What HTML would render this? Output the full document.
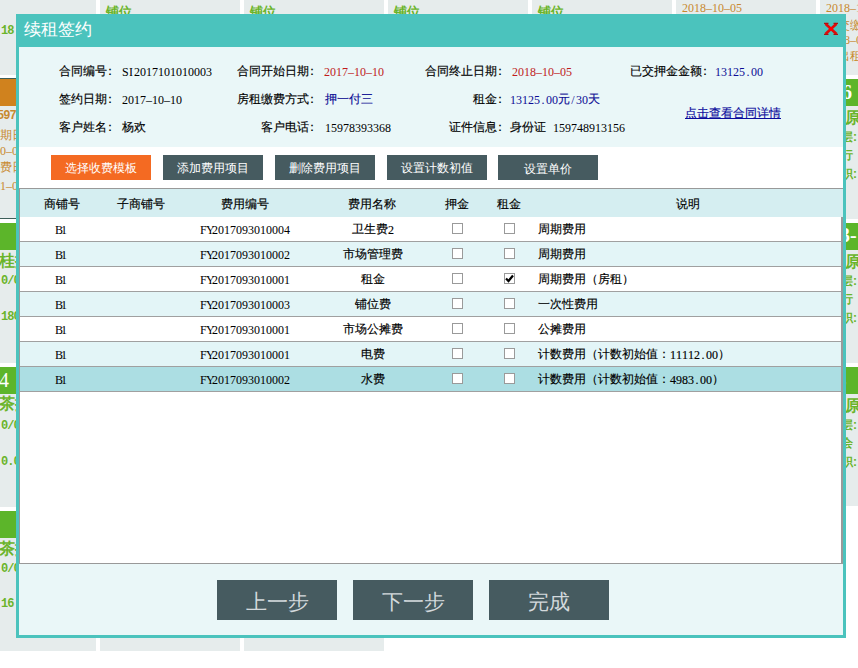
<!DOCTYPE html>
<html><head><meta charset="utf-8">
<style>
*{margin:0;padding:0;box-sizing:border-box}
html,body{width:858px;height:668px;overflow:hidden;background:#fff;font-family:"Liberation Sans",sans-serif;font-size:12px;color:#000}
.a{position:absolute;white-space:nowrap}
.c{font-style:normal;margin-left:-3px;margin-right:3px}
#info~.a:not(.m),.row .cell:not(.m){-webkit-text-stroke-width:0.15px}
.m{font-family:"Liberation Serif",serif;margin-top:1px;vertical-align:-1px}
.m i{display:inline-block;width:6px;text-align:center;font-style:normal}
.card{position:absolute;width:140px;background:#e6ecec;overflow:hidden}
.hg{position:absolute;left:0;width:140px;height:27px;background:#5cb52a}
.ho{position:absolute;left:0;width:140px;height:27px;background:#d0821e}
.gt{color:#6ab42a;font-weight:bold}
.ot{color:#c8892f}
.gb{font-family:"Liberation Mono",monospace;font-weight:bold;color:#6ab42a;font-size:12px;line-height:11px;letter-spacing:-1px}
.ob{font-family:"Liberation Mono",monospace;font-weight:bold;color:#c8892f;font-size:12px;line-height:11px;letter-spacing:-1px}
#modal{position:absolute;left:16px;top:14px;width:830px;height:624px;background:#4bc3bd}
#info{position:absolute;left:19px;top:47px;width:824px;height:100px;background:#eaf7f8}
#btnrow{position:absolute;left:19px;top:147px;width:824px;height:41px;background:#fff}
.btn{position:absolute;top:155px;width:100px;height:25px;background:#465b60;color:#fff;font-size:12px;text-align:center;line-height:25px;padding-top:1px}
#tbl{position:absolute;left:19px;top:188px;width:824px;height:376px;background:#fff;border:1px solid #999;border-right:none}
.row{position:absolute;left:20px;width:821px;height:25px;border-bottom:1px solid #a0a0a0}
.cell{position:absolute;top:0;height:24px;line-height:24px;text-align:center}
.cb{position:absolute;width:11px;height:11px;border:1px solid #9a9a9a;background:#fff}
#foot{position:absolute;left:19px;top:564px;width:824px;height:71px;background:#eaf7f8}
.fbtn{position:absolute;top:580px;width:120px;height:40px;background:#465b60;color:#d3d9dc;font-family:"Liberation Serif",serif;font-size:21px;text-align:center;line-height:44px;overflow:hidden}
.red{color:#c01c1c}
.link{color:#0a0a9c;text-decoration:underline}
.blue{color:#0c0c94}
</style></head><body>

<!-- background cards -->
<div class="card" style="left:-44px;top:-65px;height:140px"></div>
<div class="card" style="left:-44px;top:78px;height:141px;border-top:1px solid #3d5f5a;border-bottom:1px solid #3d5f5a">
 <div class="ho" style="top:0"></div>
</div>
<div class="card" style="left:-44px;top:223px;height:140px"><div class="hg" style="top:0"></div></div>
<div class="card" style="left:-44px;top:367px;height:140px"><div class="hg" style="top:0"><div class="a" style="left:43px;top:3px;font-family:'Liberation Serif';font-size:20px;line-height:20px;color:#fff">4</div></div></div>
<div class="card" style="left:-44px;top:511px;height:140px"><div class="hg" style="top:0"></div></div>
<div class="a gb" style="left:1px;top:26px">18</div>
<div class="a ob" style="left:-3px;top:111px">597</div>
<div class="a ot" style="left:0px;top:129px;line-height:12px">期日</div>
<div class="a m ot" style="left:0px;top:144px;line-height:12px"><i>0</i><i>–</i><i>0</i><i>5</i></div>
<div class="a ot" style="left:0px;top:161px;line-height:12px">费日</div>
<div class="a m ot" style="left:0px;top:179px;line-height:12px"><i>1</i><i>–</i><i>0</i><i>5</i></div>
<div class="a gt" style="left:-1px;top:253px;font-size:16px;line-height:16px">桂摊</div>
<div class="a gb" style="left:1px;top:276px">0/0</div>
<div class="a gb" style="left:1px;top:312px">180</div>
<div class="a gt" style="left:-1px;top:396px;font-size:16px;line-height:16px">茶摊</div>
<div class="a gb" style="left:1px;top:421px">0/0</div>
<div class="a gb" style="left:1px;top:457px">0.0</div>
<div class="a gt" style="left:-1px;top:541px;font-size:16px;line-height:16px">茶摊</div>
<div class="a gb" style="left:1px;top:564px">0/0</div>
<div class="a gb" style="left:1px;top:599px">16</div>

<div class="card" style="left:100px;top:-65px;height:140px"><div class="a gt" style="left:6px;top:70px;font-size:13px;line-height:14px">铺位</div></div>
<div class="card" style="left:244px;top:-65px;height:140px"><div class="a gt" style="left:6px;top:70px;font-size:13px;line-height:14px">铺位</div></div>
<div class="card" style="left:388px;top:-65px;height:140px"><div class="a gt" style="left:6px;top:70px;font-size:13px;line-height:14px">铺位</div></div>
<div class="card" style="left:532px;top:-65px;height:140px"><div class="a gt" style="left:6px;top:70px;font-size:13px;line-height:14px">铺位</div></div>
<div class="card" style="left:676px;top:-65px;height:140px"><div class="a m ot" style="left:6px;top:66px;line-height:12px"><i>2</i><i>0</i><i>1</i><i>8</i><i>–</i><i>1</i><i>0</i><i>–</i><i>0</i><i>5</i></div></div>
<div class="card" style="left:100px;top:511px;height:140px"></div>
<div class="card" style="left:244px;top:511px;height:140px"></div>

<div class="card" style="left:820px;top:-65px;height:140px">
 <div class="a m ot" style="left:6px;top:66px;line-height:12px"><i>2</i><i>0</i><i>1</i><i>8</i><i>–</i><i>1</i><i>0</i><i>–</i><i>0</i><i>5</i></div>
 <div class="a ot" style="left:6px;top:84px;line-height:12px">已交缴</div>
 <div class="a m ot" style="left:6px;top:98px;line-height:12px"><i>2</i><i>0</i><i>1</i><i>8</i><i>–</i><i>0</i><i>9</i><i>–</i><i>0</i><i>5</i></div>
 <div class="a ot" style="left:6px;top:115px;line-height:12px">已出租</div>
</div>
<div class="card" style="left:820px;top:79px;height:140px">
 <div class="hg" style="top:0"><div class="a" style="left:12px;top:3px;font-family:'Liberation Serif';font-size:20px;line-height:20px;color:#fff;font-weight:bold">16</div></div>
 <div class="a gt" style="left:25px;top:31px;font-size:16px;line-height:16px">原</div>
 <div class="a gt" style="left:21px;top:52px;line-height:12px">层:</div>
 <div class="a gt" style="left:21px;top:70px;line-height:12px">行</div>
 <div class="a gt" style="left:21px;top:89px;line-height:12px">职:</div>
</div>
<div class="card" style="left:820px;top:223px;height:140px">
 <div class="hg" style="top:0"><div class="a" style="left:20px;top:2px;font-family:'Liberation Serif';font-size:20px;line-height:20px;color:#fff;font-weight:bold">3-</div></div>
 <div class="a gt" style="left:25px;top:31px;font-size:16px;line-height:16px">原</div>
 <div class="a gt" style="left:21px;top:52px;line-height:12px">层:</div>
 <div class="a gt" style="left:21px;top:70px;line-height:12px">行</div>
 <div class="a gt" style="left:21px;top:89px;line-height:12px">职:</div>
</div>
<div class="card" style="left:820px;top:367px;height:139px">
 <div class="hg" style="top:0"><div class="a" style="left:16px;top:3px;font-family:'Liberation Serif';font-size:20px;line-height:20px;color:#fff;font-weight:bold">4</div></div>
 <div class="a gt" style="left:25px;top:31px;font-size:16px;line-height:16px">原</div>
 <div class="a gt" style="left:21px;top:52px;line-height:12px">层:</div>
 <div class="a gt" style="left:21px;top:70px;line-height:12px">会</div>
 <div class="a gt" style="left:21px;top:89px;line-height:12px">职:</div>
</div>

<!-- modal -->
<div id="modal"></div>
<div class="a" style="left:24px;top:20px;font-size:17px;color:#fff;line-height:20px">续租签约</div>
<svg class="a" style="left:818px;top:18px" width="26" height="22" viewBox="818 18 26 22"><g stroke="#e00a0a" fill="none"><path d="M825.5 23.8 L836.5 34 M836.5 23.8 L825.5 34" stroke-width="2.7"/><path d="M824 23.4 H828.5 M833.5 23.4 H838 M824 34.4 H828.5 M833.5 34.4 H838" stroke-width="1.3" stroke="#b01010"/></g><circle cx="831" cy="29" r="2.1" fill="#ff0000"/></svg>
<div id="info"></div>
<div class="a" style="left:59px;top:65px;line-height:12px">合同编号<i class="c">：</i></div>
<div class="a m" style="left:122px;top:65px;line-height:12px"><i>S</i><i>I</i><i>2</i><i>0</i><i>1</i><i>7</i><i>1</i><i>0</i><i>1</i><i>0</i><i>1</i><i>0</i><i>0</i><i>0</i><i>3</i></div>
<div class="a" style="left:237px;top:65px;line-height:12px">合同开始日期<i class="c">：</i></div>
<div class="a m red" style="left:324px;top:65px;line-height:12px"><i>2</i><i>0</i><i>1</i><i>7</i><i>–</i><i>1</i><i>0</i><i>–</i><i>1</i><i>0</i></div>
<div class="a" style="left:425px;top:65px;line-height:12px">合同终止日期<i class="c">：</i></div>
<div class="a m red" style="left:512px;top:65px;line-height:12px"><i>2</i><i>0</i><i>1</i><i>8</i><i>–</i><i>1</i><i>0</i><i>–</i><i>0</i><i>5</i></div>
<div class="a" style="left:630px;top:65px;line-height:12px">已交押金金额<i class="c">：</i></div>
<div class="a m blue" style="left:715px;top:65px;line-height:12px"><i>1</i><i>3</i><i>1</i><i>2</i><i>5</i><i>.</i><i>0</i><i>0</i></div>

<div class="a" style="left:59px;top:93px;line-height:12px">签约日期<i class="c">：</i></div>
<div class="a m" style="left:122px;top:93px;line-height:12px"><i>2</i><i>0</i><i>1</i><i>7</i><i>–</i><i>1</i><i>0</i><i>–</i><i>1</i><i>0</i></div>
<div class="a" style="left:237px;top:93px;line-height:12px">房租缴费方式<i class="c">：</i></div>
<div class="a blue" style="left:325px;top:93px;line-height:12px">押一付三</div>
<div class="a" style="left:473px;top:93px;line-height:12px">租金<i class="c">：</i></div>
<div class="a m blue" style="left:510px;top:93px;line-height:12px"><i>1</i><i>3</i><i>1</i><i>2</i><i>5</i><i>.</i><i>0</i><i>0</i></div><div class="a blue" style="left:558px;top:93px;line-height:12px">元</div><div class="a m blue" style="left:570px;top:93px;line-height:12px"><i>/</i><i>3</i><i>0</i></div><div class="a blue" style="left:588px;top:93px;line-height:12px">天</div>
<div class="a link" style="left:685px;top:107px;line-height:12px">点击查看合同详情</div>

<div class="a" style="left:59px;top:121px;line-height:12px">客户姓名<i class="c">：</i></div>
<div class="a" style="left:122px;top:121px;line-height:12px">杨欢</div>
<div class="a" style="left:261px;top:121px;line-height:12px">客户电话<i class="c">：</i></div>
<div class="a m" style="left:325px;top:121px;line-height:12px"><i>1</i><i>5</i><i>9</i><i>7</i><i>8</i><i>3</i><i>9</i><i>3</i><i>3</i><i>6</i><i>8</i></div>
<div class="a" style="left:449px;top:121px;line-height:12px">证件信息<i class="c">：</i></div>
<div class="a" style="left:510px;top:121px;line-height:12px">身份证</div><div class="a m" style="left:553px;top:121px;line-height:12px"><i>1</i><i>5</i><i>9</i><i>7</i><i>4</i><i>8</i><i>9</i><i>1</i><i>3</i><i>1</i><i>5</i><i>6</i></div>

<div id="btnrow"></div>
<div class="btn" style="left:51px;background:#f46a22">选择收费模板</div>
<div class="btn" style="left:163px">添加费用项目</div>
<div class="btn" style="left:275px">删除费用项目</div>
<div class="btn" style="left:387px">设置计数初值</div>
<div class="btn" style="left:498px;padding-top:2px">设置单价</div>
<div id="tbl"></div>
<div class="a" style="left:20px;top:189px;width:823px;height:28px;background:#d5eef1"></div>
<div class="a" style="left:44px;top:198px;line-height:12px">商铺号</div>
<div class="a" style="left:117px;top:198px;line-height:12px">子商铺号</div>
<div class="a" style="left:221px;top:198px;line-height:12px">费用编号</div>
<div class="a" style="left:348px;top:198px;line-height:12px">费用名称</div>
<div class="a" style="left:445px;top:198px;line-height:12px">押金</div>
<div class="a" style="left:497px;top:198px;line-height:12px">租金</div>
<div class="a" style="left:676px;top:198px;line-height:12px">说明</div>
<div class="a" style="left:841px;top:217px;width:2px;height:347px;background:#9a9a9a"></div>
<div class="row" style="top:217px;background:#fff">
<div class="cell m" style="left:1px;width:80px"><i>B</i><i>1</i></div>
<div class="cell m" style="left:145px;width:160px"><i>F</i><i>Y</i><i>2</i><i>0</i><i>1</i><i>7</i><i>0</i><i>9</i><i>3</i><i>0</i><i>1</i><i>0</i><i>0</i><i>0</i><i>4</i></div>
<div class="cell" style="left:293px;width:120px">卫生费<span class='m'><i>2</i></span></div>
<div class="cb" style="left:432px;top:6px"></div>
<div class="cb" style="left:484px;top:6px"></div>
<div class="cell" style="left:518px;text-align:left">周期费用</div>
</div>
<div class="row" style="top:242px;background:#e3f5f7">
<div class="cell m" style="left:1px;width:80px"><i>B</i><i>1</i></div>
<div class="cell m" style="left:145px;width:160px"><i>F</i><i>Y</i><i>2</i><i>0</i><i>1</i><i>7</i><i>0</i><i>9</i><i>3</i><i>0</i><i>1</i><i>0</i><i>0</i><i>0</i><i>2</i></div>
<div class="cell" style="left:293px;width:120px">市场管理费</div>
<div class="cb" style="left:432px;top:6px"></div>
<div class="cb" style="left:484px;top:6px"></div>
<div class="cell" style="left:518px;text-align:left">周期费用</div>
</div>
<div class="row" style="top:267px;background:#fff">
<div class="cell m" style="left:1px;width:80px"><i>B</i><i>1</i></div>
<div class="cell m" style="left:145px;width:160px"><i>F</i><i>Y</i><i>2</i><i>0</i><i>1</i><i>7</i><i>0</i><i>9</i><i>3</i><i>0</i><i>1</i><i>0</i><i>0</i><i>0</i><i>1</i></div>
<div class="cell" style="left:293px;width:120px">租金</div>
<div class="cb" style="left:432px;top:6px"></div>
<div class="cb" style="left:484px;top:6px"><svg width=9 height=9 viewBox="0 0 9 9" style="position:absolute;left:0;top:0"><path d="M1 4.5 L3.5 7 L8 1.5" stroke="#000" stroke-width="2.2" fill="none"/></svg></div>
<div class="cell" style="left:518px;text-align:left">周期费用（房租）</div>
</div>
<div class="row" style="top:292px;background:#e3f5f7">
<div class="cell m" style="left:1px;width:80px"><i>B</i><i>1</i></div>
<div class="cell m" style="left:145px;width:160px"><i>F</i><i>Y</i><i>2</i><i>0</i><i>1</i><i>7</i><i>0</i><i>9</i><i>3</i><i>0</i><i>1</i><i>0</i><i>0</i><i>0</i><i>3</i></div>
<div class="cell" style="left:293px;width:120px">铺位费</div>
<div class="cb" style="left:432px;top:6px"></div>
<div class="cb" style="left:484px;top:6px"></div>
<div class="cell" style="left:518px;text-align:left">一次性费用</div>
</div>
<div class="row" style="top:317px;background:#fff">
<div class="cell m" style="left:1px;width:80px"><i>B</i><i>1</i></div>
<div class="cell m" style="left:145px;width:160px"><i>F</i><i>Y</i><i>2</i><i>0</i><i>1</i><i>7</i><i>0</i><i>9</i><i>3</i><i>0</i><i>1</i><i>0</i><i>0</i><i>0</i><i>1</i></div>
<div class="cell" style="left:293px;width:120px">市场公摊费</div>
<div class="cb" style="left:432px;top:6px"></div>
<div class="cb" style="left:484px;top:6px"></div>
<div class="cell" style="left:518px;text-align:left">公摊费用</div>
</div>
<div class="row" style="top:342px;background:#e3f5f7">
<div class="cell m" style="left:1px;width:80px"><i>B</i><i>1</i></div>
<div class="cell m" style="left:145px;width:160px"><i>F</i><i>Y</i><i>2</i><i>0</i><i>1</i><i>7</i><i>0</i><i>9</i><i>3</i><i>0</i><i>1</i><i>0</i><i>0</i><i>0</i><i>1</i></div>
<div class="cell" style="left:293px;width:120px">电费</div>
<div class="cb" style="left:432px;top:6px"></div>
<div class="cb" style="left:484px;top:6px"></div>
<div class="cell" style="left:518px;text-align:left">计数费用（计数初始值：<span class='m'><i>1</i><i>1</i><i>1</i><i>1</i><i>2</i><i>.</i><i>0</i><i>0</i></span>）</div>
</div>
<div class="row" style="top:367px;background:#acdee3">
<div class="cell m" style="left:1px;width:80px"><i>B</i><i>1</i></div>
<div class="cell m" style="left:145px;width:160px"><i>F</i><i>Y</i><i>2</i><i>0</i><i>1</i><i>7</i><i>0</i><i>9</i><i>3</i><i>0</i><i>1</i><i>0</i><i>0</i><i>0</i><i>2</i></div>
<div class="cell" style="left:293px;width:120px">水费</div>
<div class="cb" style="left:432px;top:6px"></div>
<div class="cb" style="left:484px;top:6px"></div>
<div class="cell" style="left:518px;text-align:left">计数费用（计数初始值：<span class='m'><i>4</i><i>9</i><i>8</i><i>3</i><i>.</i><i>0</i><i>0</i></span>）</div>
</div>
<div id="foot"></div>
<div class="fbtn" style="left:217px">上一步</div>
<div class="fbtn" style="left:353px">下一步</div>
<div class="fbtn" style="left:489px">完成</div>

</body></html>
